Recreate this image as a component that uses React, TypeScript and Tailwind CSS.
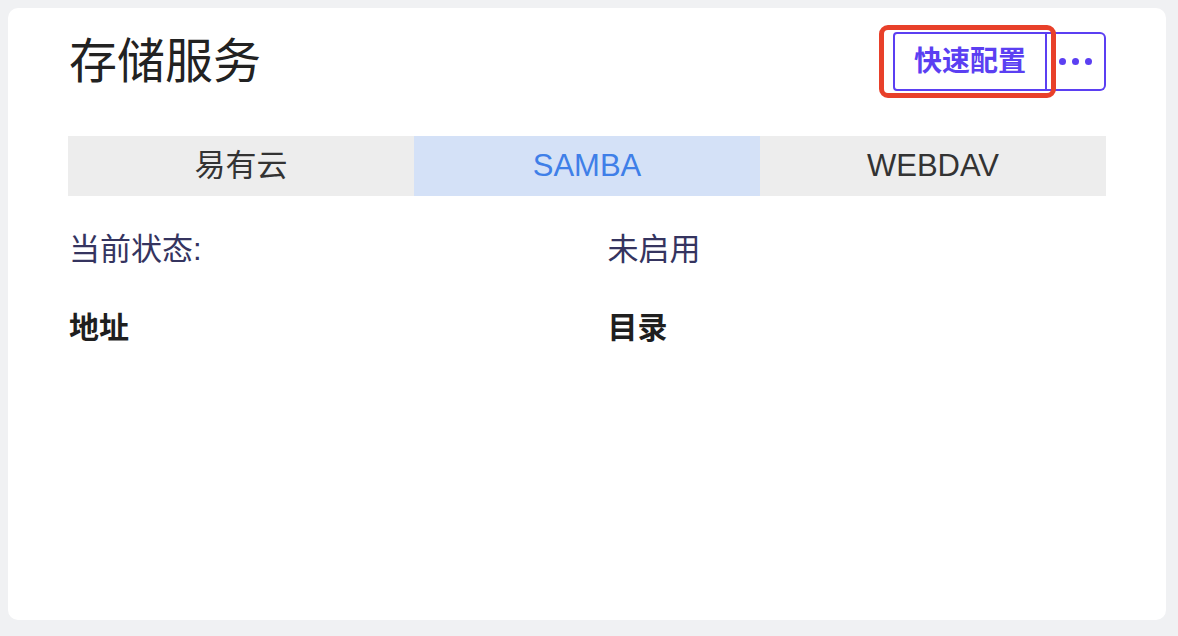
import React from "react";

const font = { fontFamily: '"Liberation Sans", "Noto Sans CJK SC", sans-serif' };

export default function App() {
  const tabs = ["易有云", "SAMBA", "WEBDAV"];
  const active = 1;
  return (
    <div className="min-h-screen w-full bg-[#f0f1f3] p-[8px]" style={font}>
      <div className="h-[612px] w-[1158px] rounded-[10px] bg-white px-[60px] pt-[24px]">
        <div className="flex h-[59px] items-center justify-between">
          <h1 className="pl-[1px] text-[48px] leading-[59px] font-normal text-[#222222]">存储服务</h1>
          <div className="relative flex h-[59px]">
            <button className="h-[59px] w-[154px] rounded-l-[4px] border-2 border-[#5b3ff2] bg-white text-[28px] font-semibold leading-none text-[#5b3ff2]">
              快速配置
            </button>
            <button className="flex h-[59px] w-[59px] items-center justify-center gap-[6px] rounded-r-[6px] border-2 border-l-0 border-[#5b3ff2] bg-white">
              <span className="h-[7px] w-[7px] rounded-full bg-[#5b3ff2]" />
              <span className="h-[7px] w-[7px] rounded-full bg-[#5b3ff2]" />
              <span className="h-[7px] w-[7px] rounded-full bg-[#5b3ff2]" />
            </button>
            <div className="pointer-events-none absolute left-[-14px] top-[-7px] h-[73px] w-[177px] rounded-[9px] border-[5px] border-[#e8402a]" />
          </div>
        </div>

        <div className="mt-[45px] grid h-[60px] grid-cols-3">
          {tabs.map((t, i) => (
            <div
              key={t}
              className={
                i === active
                  ? "flex items-center justify-center bg-[#d4e1f7] text-[31px] text-[#3f7fe8]"
                  : "flex items-center justify-center bg-[#ededed] text-[31px] text-[#333333]"
              }
            >
              {t}
            </div>
          ))}
        </div>

        <div className="mt-[34px] grid grid-cols-2 gap-x-[40px] gap-y-[38px] pl-[1px]">
          <div className="text-[31px] leading-[40px] text-[#35345f]">当前状态:</div>
          <div className="text-[31px] leading-[40px] text-[#35345f]">未启用</div>
          <div className="text-[30px] font-bold leading-[40px] text-[#1f1f1f]">地址</div>
          <div className="text-[30px] font-bold leading-[40px] text-[#1f1f1f]">目录</div>
        </div>
      </div>
    </div>
  );
}
